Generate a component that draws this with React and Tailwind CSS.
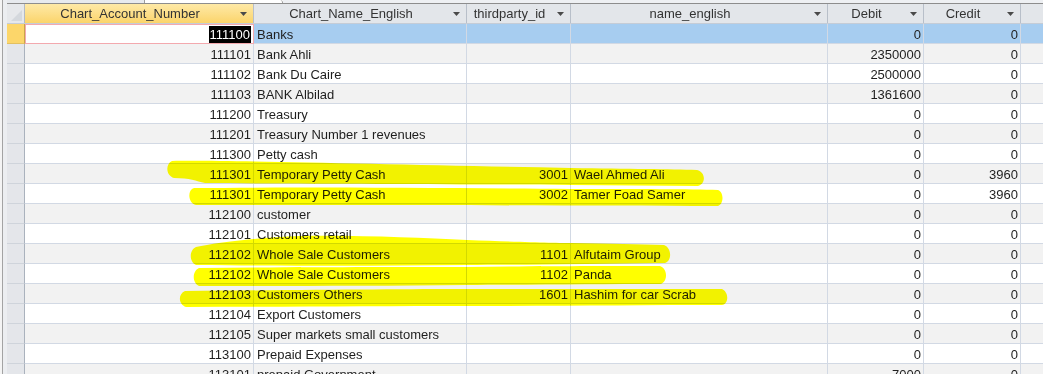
const font = { fontFamily: '"Liberation Sans", Arial, sans-serif' };

const columns = [
    { label: 'Chart_Account_Number', width: 'w-[229px]', align: 'right' },
    { label: 'Chart_Name_English', width: 'w-[213px]', align: 'left' },
    { label: 'thirdparty_id', width: 'w-[104px]', align: 'right' },
    { label: 'name_english', width: 'w-[257px]', align: 'left' },
    { label: 'Debit', width: 'w-[96px]', align: 'right' },
    { label: 'Credit', width: 'w-[97px]', align: 'right' },
];

const rows = [
    ['111100', 'Banks', '', '', '0', '0'],
    ['111101', 'Bank Ahli', '', '', '2350000', '0'],
    ['111102', 'Bank Du Caire', '', '', '2500000', '0'],
    ['111103', 'BANK Albilad', '', '', '1361600', '0'],
    ['111200', 'Treasury', '', '', '0', '0'],
    ['111201', 'Treasury Number 1 revenues', '', '', '0', '0'],
    ['111300', 'Petty cash', '', '', '0', '0'],
    ['111301', 'Temporary Petty Cash', '3001', 'Wael Ahmed Ali', '0', '3960'],
    ['111301', 'Temporary Petty Cash', '3002', 'Tamer Foad Samer', '0', '3960'],
    ['112100', 'customer', '', '', '0', '0'],
    ['112101', 'Customers retail', '', '', '0', '0'],
    ['112102', 'Whole Sale Customers', '1101', 'Alfutaim Group', '0', '0'],
    ['112102', 'Whole Sale Customers', '1102', 'Panda', '0', '0'],
    ['112103', 'Customers Others', '1601', 'Hashim for car Scrab', '0', '0'],
    ['112104', 'Export Customers', '', '', '0', '0'],
    ['112105', 'Super markets small customers', '', '', '0', '0'],
    ['113100', 'Prepaid Expenses', '', '', '0', '0'],
    ['113101', 'prepaid Government', '', '', '7000', '0'],
];

// freehand marker strokes, in page pixels
const strokes = [
    'M172,161 C230,160 400,165 571,168 C630,169 670,169 697,170 C706,172 706,184 698,186 L571,185 C450,184 300,184 205,183 C196,181 190,178 174,178 C166,176 165,164 172,161 Z',
    'M194,188 C300,187 450,188 571,189 C640,189 690,189 718,190 C724,192 724,204 718,206 C640,206 560,206 470,205 C380,205 280,205 196,205 C188,203 187,190 194,188 Z',
    'M196,247 C215,243 250,238 300,236 C360,235 420,238 467,240 C520,242 560,243 571,243 C610,244 640,244 664,245 C672,248 672,261 665,263 C600,264 520,265 467,265 C380,266 300,266 196,265 C189,262 189,250 196,247 Z',
    'M199,268 C300,267 400,267 467,267 C540,266 610,266 660,266 C668,269 668,282 660,284 C600,284 520,285 467,285 C380,286 280,286 199,286 C192,283 192,271 199,268 Z',
    'M185,291 C300,290 400,289 467,289 C560,289 650,289 722,289 C729,292 729,304 722,305 C640,305 560,306 467,306 C380,306 280,307 186,307 C178,304 178,294 185,291 Z',
];

const Arrow = () => (
    <svg width="7" height="4" viewBox="0 0 7 4" className="block">
        <polygon points="0,0 7,0 3.5,4" fill="#4a4a4a" />
    </svg>
);

const App = () => {
    return (
        <div className="relative w-[1043px] h-[374px] overflow-hidden bg-white flex text-[13px] text-[#1e1e1e]" style={font}>
            {/* left frame */}
            <div className="w-[7px] shrink-0 flex">
                <div className="w-[2px] bg-[#f4f4f4]" />
                <div className="w-px bg-[#a3a3a3]" />
                <div className="flex-1 bg-[#eceef1]" />
            </div>

            <div className="flex-1 flex flex-col min-w-0">
                {/* object tabs strip */}
                <div className="h-[3px] flex shrink-0">
                    <div className="w-[138px] bg-[#e7eaee] border-r border-[#9c9c9c]" />
                    <div className="w-[138px] bg-white border-r border-[#9c9c9c] rounded-tr-[3px]" />
                    <div className="flex-1 bg-[#eef0f3]" />
                </div>

                {/* header */}
                <div className="h-[21px] flex shrink-0 border-t border-b border-t-[#8d8d8d] border-b-[#c5ccd6] bg-[#e3e6ea] text-[#333]">
                    <div className="w-[18px] shrink-0 border-r border-[#b3bac4] bg-[#e6e8eb] flex items-end justify-end p-[2px]">
                        <svg width="11" height="11" viewBox="0 0 11 11">
                            <polygon points="11,0 11,11 0,11" fill="#d4d8dd" />
                        </svg>
                    </div>
                    {columns.map((col, i) => (
                        <div
                            key={col.label}
                            className={`${col.width} shrink-0 flex items-center border-r border-[#b8bfc9] ${
                                i === 0 ? 'bg-linear-to-b from-[#fee9a6] to-[#fbd46a]' : ''
                            }`}
                        >
                            <span className="flex-1 text-center whitespace-nowrap">{col.label}</span>
                            <span className="w-[18px] flex justify-end pr-[6px]">
                                <Arrow />
                            </span>
                        </div>
                    ))}
                    <div className="flex-1" />
                </div>

                {/* rows */}
                {rows.map((row, r) => {
                    const current = r === 0;
                    const stripe = r % 2 === 1 ? 'bg-[#f2f2f2]' : 'bg-white';
                    const fill = current ? 'bg-[#a7cdf0]' : stripe;
                    return (
                        <div key={r} className="h-[20px] flex shrink-0">
                            <div
                                className={`w-[18px] shrink-0 border-r border-b ${
                                    current ? 'bg-[#fcd66a] border-r-[#c9a64a] border-b-[#e3c060]' : 'bg-[#e4e6ea] border-r-[#aab2bd] border-b-[#cfd4db]'
                                }`}
                            />
                            {row.map((val, c) => {
                                const col = columns[c];
                                const align = col.align === 'right' ? 'justify-end pr-[2px]' : 'justify-start pl-[3px]';
                                if (current && c === 0) {
                                    return (
                                        <div key={c} className={`${col.width} shrink-0 flex items-center ${align} bg-white border border-[#f3a9ae] pt-px`}>
                                            <span className="bg-black text-white leading-[17px] px-px">{val}</span>
                                        </div>
                                    );
                                }
                                return (
                                    <div
                                        key={c}
                                        className={`${col.width} shrink-0 flex items-center pt-[2px] ${align} ${fill} border-r border-b border-[#d2d9e4] whitespace-nowrap overflow-hidden`}
                                    >
                                        {val}
                                    </div>
                                );
                            })}
                            <div className={`flex-1 ${fill} border-b border-[#d2d9e4]`} />
                        </div>
                    );
                })}
            </div>

            {/* yellow marker over the grid */}
            <svg
                className="absolute inset-0 pointer-events-none mix-blend-multiply"
                width="1043"
                height="374"
                viewBox="0 0 1043 374"
            >
                {strokes.map((d, i) => (
                    <path key={i} d={d} fill="#ffff00" />
                ))}
            </svg>
        </div>
    );
};

export default App;
